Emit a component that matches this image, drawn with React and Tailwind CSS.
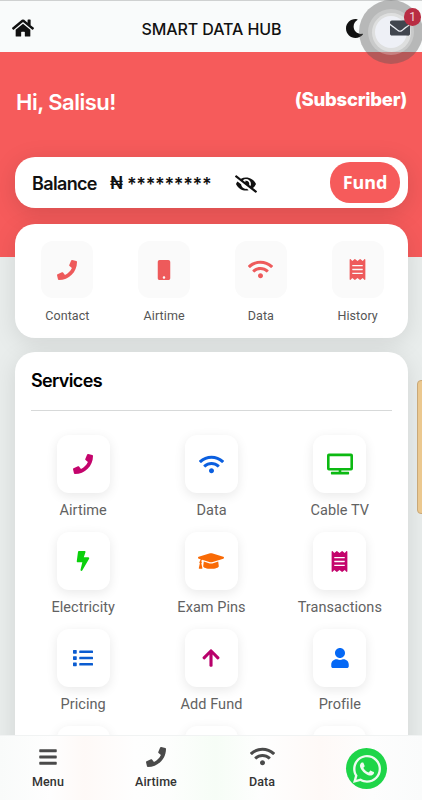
import React from "react";
import {
  FaHome, FaPhone, FaMobile, FaWifi, FaReceipt, FaTv, FaBolt, FaMoon, FaEnvelope, FaEyeSlash,
  FaGraduationCap, FaList, FaArrowUp, FaUser, FaBars, FaWhatsapp,
} from "react-icons/fa";

const quickLinks = [
  { label: "Contact", icon: <FaPhone size={20} /> },
  { label: "Airtime", icon: <FaMobile size={20} /> },
  { label: "Data", icon: <FaWifi size={25} /> },
  { label: "History", icon: <FaReceipt size={21} /> },
];

const services = [
  { label: "Airtime", icon: <FaPhone size={20} />, color: "text-[#c4046c]" },
  { label: "Data", icon: <FaWifi size={25} />, color: "text-[#0b5fdf]" },
  { label: "Cable TV", icon: <FaTv size={26} />, color: "text-[#0cb912]" },
  { label: "Electricity", icon: <FaBolt size={20} />, color: "text-[#0bd00c]" },
  { label: "Exam Pins", icon: <FaGraduationCap size={26} />, color: "text-[#f96a05]" },
  { label: "Transactions", icon: <FaReceipt size={21} />, color: "text-[#c4046c]" },
  { label: "Pricing", icon: <FaList size={20} />, color: "text-[#0b5cd0]" },
  { label: "Add Fund", icon: <FaArrowUp size={20} />, color: "text-[#b8006b]" },
  { label: "Profile", icon: <FaUser size={20} />, color: "text-[#0568f5]" },
  { label: "", icon: null, color: "" },
  { label: "", icon: null, color: "" },
  { label: "", icon: null, color: "" },
];

function Header() {
  return (
    <header className="grid h-[52px] grid-cols-[1fr_auto_1fr] items-center border-t border-[#cfd1d1] bg-[#f9fbfb] px-3 pt-1 text-[#111]">
      <FaHome size={22} className="-mt-[1px]" />
      <h1 className="pl-px text-[16px] font-medium tracking-[-0.1px]">SMART DATA HUB</h1>
      <div className="-mt-[1px] flex items-center justify-end gap-[26px]">
        <FaMoon size={19} />
        <FaEnvelope size={20} />
      </div>
    </header>
  );
}

function TouchBubble() {
  return (
    <>
      <div className="absolute left-[359px] top-0 flex h-16 w-16 items-center justify-center rounded-full bg-[#555]/40">
        <div className="flex h-[46px] w-[46px] items-center justify-center rounded-full bg-white/25">
          <div className="flex h-[39px] w-[39px] items-center justify-center rounded-full bg-white/40">
            <div className="h-8 w-8 rounded-full bg-[#f3f5fd]/75" />
          </div>
        </div>
      </div>
      <FaEnvelope size={20} className="absolute left-[390px] top-[18px] text-[#41454e]" />
      <span className="absolute left-[404px] top-2 flex h-[18px] w-[17px] items-center justify-center rounded-full bg-[#b92d43] font-[Roboto,sans-serif] text-[12px] text-[#eed5da]">1</span>
    </>
  );
}

function BottomNav() {
  const item = "flex w-[60px] flex-col items-center";
  const label = "mt-[7px] text-[12.5px] leading-4 font-medium tracking-[0.1px] text-[#333]";
  return (
    <nav className="absolute inset-x-0 bottom-0 flex h-[65px] items-start border-t border-[#f1f3f3] bg-[linear-gradient(90deg,#f9fbfa_0%,#fefefe_12%,#fef9f7_20%,#fefefe_32%,#fdfefd_40%,#f6fdf6_51%,#fefefe_62%,#fef9f7_76%,#fdfdfd_88%,#fafbfb_100%)] pl-[18px] font-[Roboto,sans-serif] text-[#4a4a4a]">
      <div className={item}>
        <div className="flex h-[31px] items-end"><FaBars size={20} /></div>
        <span className={label}>Menu</span>
      </div>
      <div className={item + " ml-[48px]"}>
        <div className="flex h-[31px] items-end"><FaPhone size={20} /></div>
        <span className={label}>Airtime</span>
      </div>
      <div className={item + " ml-[46px]"}>
        <div className="flex h-[31px] items-end"><FaWifi size={25} className="-mb-[2px]" /></div>
        <span className={label}>Data</span>
      </div>
      <div className="ml-[54px] mt-3 flex h-[41px] w-[41px] items-center justify-center rounded-full bg-[#1ed548] text-[#effbf0]">
        <FaWhatsapp size={32} />
      </div>
    </nav>
  );
}

export default function App() {
  return (
    <div className="relative h-[800px] w-[422px] overflow-hidden bg-[#e9edec] font-[Inter,sans-serif]">
      <Header />
      <section className="h-[205px] bg-[#f65b5b] pl-[15px] pr-[14px] pt-[36px]">
        <div className="flex h-[30px] items-start justify-between pl-px pr-px text-white">
          <h2 className="text-[22px] leading-7 font-semibold tracking-[-0.5px]">Hi, Salisu!</h2>
          <span className="text-[18.5px] leading-[22px] font-extrabold tracking-[-0.25px]">(Subscriber)</span>
        </div>
        <div className="mt-[39px] flex h-[51px] items-center rounded-[20px] bg-white pl-[17px] pr-[8px] text-[#111] shadow-[0_5px_24px_rgba(0,0,0,0.13)]">
          <span className="w-[78px] pt-[2px] text-[18px] font-semibold tracking-[-0.65px]">Balance</span>
          <span className="w-[17px] pt-[2px] text-[17px] font-semibold">₦</span>
          <span className="w-[108px] pt-[3px] text-[18px] font-semibold tracking-[-0.35px]">*********</span>
          <FaEyeSlash size={22} className="mt-[2px]" />
          <button className="ml-auto h-[41px] w-[70px] rounded-[20px] bg-[#f65b5b] pb-[1px] font-['Noto_Sans',sans-serif] text-[18px] font-bold text-white">Fund</button>
        </div>
      </section>

      <main className="-mt-[33px] pl-[15px] pr-[14px]">
        <section className="grid h-[114px] grid-cols-4 rounded-[20px] bg-white pl-[4px] pr-[2px] pt-[17px] shadow-[0_5px_24px_rgba(0,0,0,0.1)]">
          {quickLinks.map((q) => (
            <div key={q.label} className="flex flex-col items-center">
              <div className="flex h-[57px] w-[52px] items-center justify-center rounded-xl bg-[#fafafa] text-[#ee5a5b]">{q.icon}</div>
              <span className="mt-[10px] font-[Roboto,sans-serif] text-[12.5px] leading-4 tracking-[0.1px] text-[#555]">{q.label}</span>
            </div>
          ))}
        </section>

        <section className="mt-[14px] h-[520px] rounded-[20px] bg-white px-4 pt-[15px] shadow-[0_5px_24px_rgba(0,0,0,0.1)]">
          <h3 className="h-[43px] text-[18px] leading-7 font-semibold tracking-[-0.65px] text-black">Services</h3>
          <div className="border-t border-[#d7d9d9]" />
          <div className="-mx-3 grid grid-cols-3 pt-[24px]">
            {services.map((s, i) => (
              <div key={i} className="flex h-[97px] flex-col items-center">
                <div className={"flex h-[58px] w-[53px] items-center justify-center rounded-xl bg-white shadow-[0_3px_12px_rgba(0,0,0,0.09)] " + s.color}>{s.icon}</div>
                <span className="mt-[8px] font-[Roboto,sans-serif] text-[14.5px] leading-5 tracking-[0.05px] text-[#626262]">{s.label}</span>
              </div>
            ))}
          </div>
        </section>
      </main>

      <div className="absolute left-[417px] top-[380px] h-[134px] w-3 rounded-[4px] border border-[#c9a878] bg-[#ebc88f]" />
      <TouchBubble />
      <BottomNav />
    </div>
  );
}
